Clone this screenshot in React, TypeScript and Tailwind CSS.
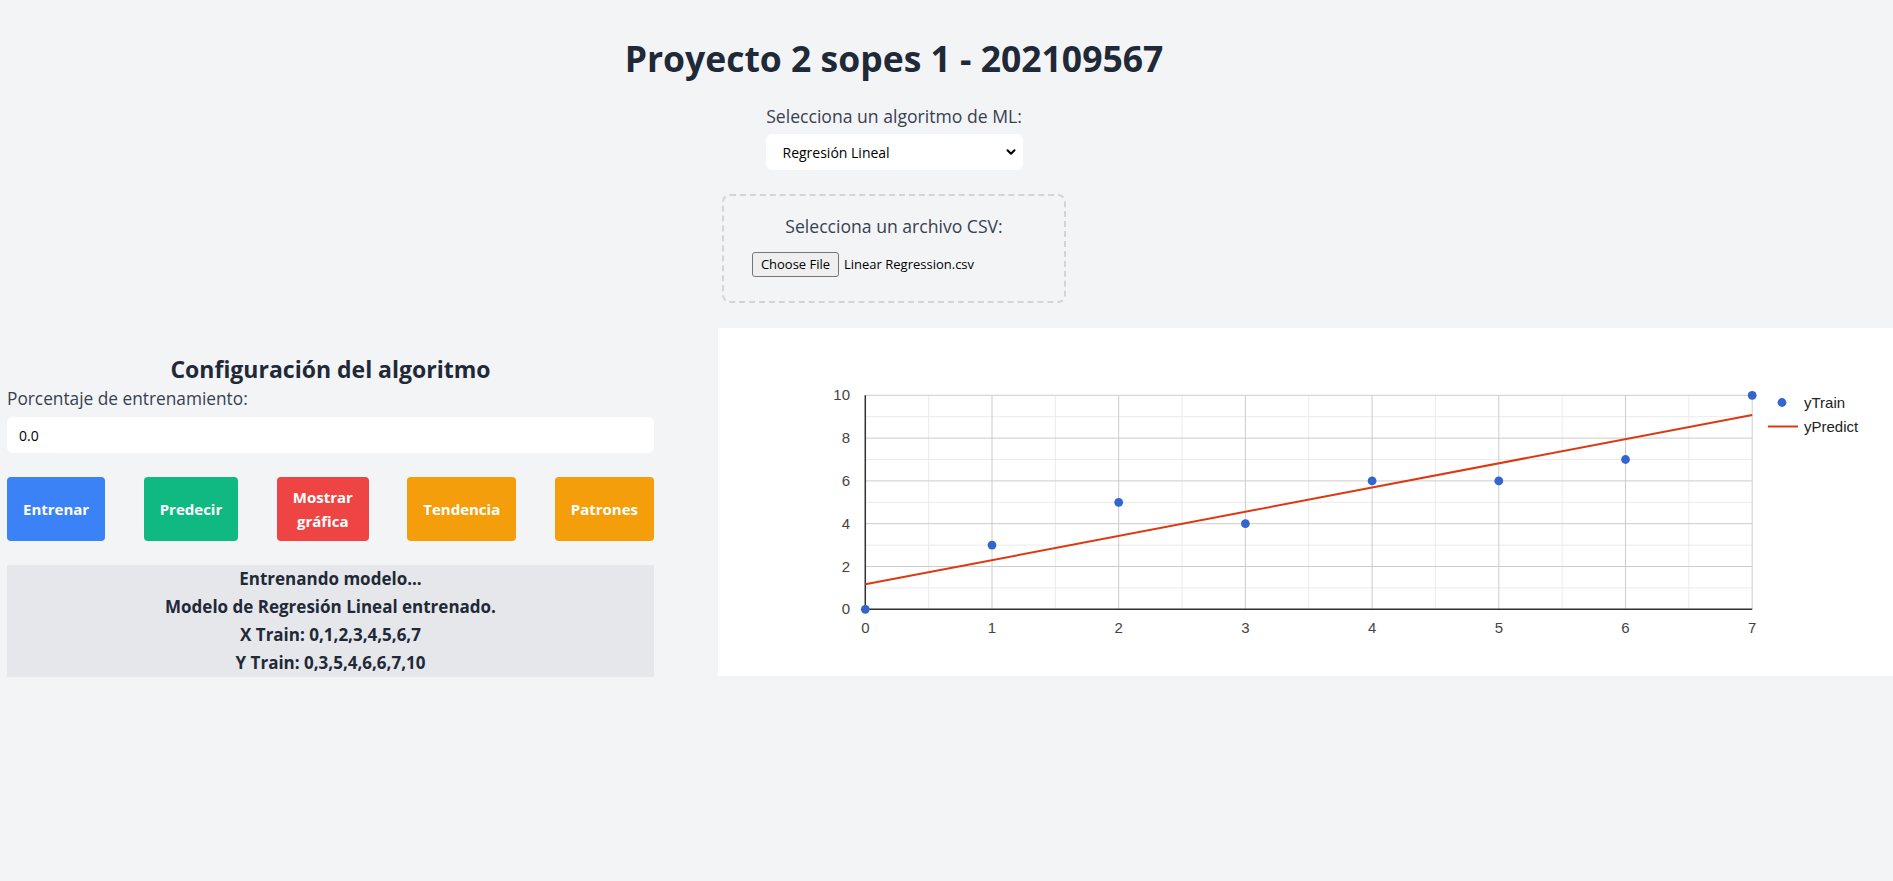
import React from 'react';
import { ChevronDown } from 'lucide-react';

const xTrain = [0, 1, 2, 3, 4, 5, 6, 7];
const yTrain = [0, 3, 5, 4, 6, 6, 7, 10];

const fit = () => {
  const n = xTrain.length;
  const mx = xTrain.reduce((a, b) => a + b, 0) / n;
  const my = yTrain.reduce((a, b) => a + b, 0) / n;
  let sxy = 0;
  let sxx = 0;
  xTrain.forEach((x, i) => {
    sxy += (x - mx) * (yTrain[i] - my);
    sxx += (x - mx) * (x - mx);
  });
  const m = sxy / sxx;
  return { m, b: my - m * mx };
};

const PX0 = 147.3;
const PXS = 126.7;
const PY0 = 281.3;
const PYS = 21.4;
const sx = (x: number) => PX0 + x * PXS;
const sy = (y: number) => PY0 - y * PYS;

const Chart: React.FC = () => {
  const { m, b } = fit();
  const major = [0, 2, 4, 6, 8, 10];
  const minorY = [1, 3, 5, 7, 9];
  const minorX = [0.5, 1.5, 2.5, 3.5, 4.5, 5.5, 6.5];
  return (
    <svg width="1175" height="348" viewBox="0 0 1175 348" style={{ fontFamily: '"Liberation Sans", Arial, sans-serif' }}>
      {minorY.map((v) => (
        <line key={'my' + v} x1={sx(0)} x2={sx(7)} y1={sy(v)} y2={sy(v)} stroke="#ebebeb" strokeWidth="1" />
      ))}
      {minorX.map((v) => (
        <line key={'mx' + v} x1={sx(v)} x2={sx(v)} y1={sy(0)} y2={sy(10)} stroke="#ebebeb" strokeWidth="1" />
      ))}
      {major.map((v) => (
        <line key={'gy' + v} x1={sx(0)} x2={sx(7)} y1={sy(v)} y2={sy(v)} stroke="#cccccc" strokeWidth="1" />
      ))}
      {xTrain.map((v) => (
        <line key={'gx' + v} x1={sx(v)} x2={sx(v)} y1={sy(0)} y2={sy(10)} stroke="#cccccc" strokeWidth="1" />
      ))}
      <line x1={sx(0)} x2={sx(7)} y1={sy(0)} y2={sy(0)} stroke="#333333" strokeWidth="1.5" />
      <line x1={sx(0)} x2={sx(0)} y1={sy(0)} y2={sy(10)} stroke="#333333" strokeWidth="1.5" />

      {major.map((v) => (
        <text key={'ly' + v} x="132" y={sy(v) + 5} textAnchor="end" fontSize="15" fill="#444444">
          {v}
        </text>
      ))}
      {xTrain.map((v) => (
        <text key={'lx' + v} x={sx(v)} y="304.5" textAnchor="middle" fontSize="15" fill="#444444">
          {v}
        </text>
      ))}

      <line x1={sx(0)} y1={sy(b)} x2={sx(7)} y2={sy(m * 7 + b)} stroke="#dc3912" strokeWidth="2" />
      {xTrain.map((x, i) => (
        <circle key={'p' + x} cx={sx(x)} cy={sy(yTrain[i])} r="4.4" fill="#3366cc" />
      ))}

      <circle cx="1064" cy="74.5" r="4.4" fill="#3366cc" />
      <text x="1086" y="79.5" fontSize="15" fill="#222222">yTrain</text>
      <line x1="1050" x2="1080" y1="98.5" y2="98.5" stroke="#dc3912" strokeWidth="2" />
      <text x="1086" y="103.5" fontSize="15" fill="#222222">yPredict</text>
    </svg>
  );
};

const buttons = [
  { label: 'Entrenar', cls: 'bg-[#3b82f6]' },
  { label: 'Predecir', cls: 'bg-[#10b981]' },
  { label: 'Mostrar gráfica', cls: 'bg-[#ef4444]' },
  { label: 'Tendencia', cls: 'bg-[#f59e0b]' },
  { label: 'Patrones', cls: 'bg-[#f59e0b]' },
];

const App: React.FC = () => {
  return (
    <div className="min-h-[881px] bg-[#f3f4f6] text-[#1f2937]" style={{ fontFamily: '"Open Sans", "Noto Sans", sans-serif' }}>
      <div className="w-[1788px] flex flex-col items-center pt-[38px]">
        <h1 className="text-[35.5px] leading-10 font-bold text-[#1f2937]">Proyecto 2 sopes 1 - 202109567</h1>
        <label className="mt-6 text-[17.6px] leading-7 font-medium text-[#374151]">Selecciona un algoritmo de ML:</label>
        <div className="relative mt-1 w-[257px] h-9">
          <select className="w-full h-full appearance-none bg-white rounded-md pl-[17px] text-[14px] text-black outline-none">
            <option>Regresión Lineal</option>
          </select>
          <ChevronDown className="absolute right-[5px] top-[11px] w-[14px] h-[14px] text-black pointer-events-none" strokeWidth={3.5} />
        </div>
        <div className="mt-6 w-[344px] h-[109px] border-2 border-dashed border-[#d1d5db] rounded-lg pt-4">
          <p className="text-center text-[17.6px] leading-7 font-medium text-[#374151]">Selecciona un archivo CSV:</p>
          <div className="mt-3 pl-7 flex items-center gap-[5px] text-[13px] text-black">
            <button className="h-[25px] w-[87px] bg-[#efefef] border border-[#767676] rounded-[3px] text-[13px] text-black">Choose File</button>
            <span>Linear Regression.csv</span>
          </div>
        </div>
      </div>

      <div className="mt-[25px] flex">
        <div className="ml-[7px] w-[647px] pt-[25px]">
          <h2 className="text-center text-[23px] leading-8 font-bold text-[#1f2937]">Configuración del algoritmo</h2>
          <label className="block text-[17.3px] leading-7 text-[#374151]">Porcentaje de entrenamiento:</label>
          <input
            type="text"
            defaultValue="0.0"
            className="mt-1 w-full h-9 bg-white rounded-md px-3 text-[14px] text-black outline-none"
          />
          <div className="mt-6 flex justify-between">
            {buttons.map((btn) => (
              <button
                key={btn.label}
                className={`${btn.cls} text-white font-bold text-[15px] leading-6 rounded py-2 px-4 ${btn.label === 'Mostrar gráfica' ? 'w-[92px]' : ''}`}
              >
                {btn.label}
              </button>
            ))}
          </div>
          <div className="mt-6 bg-[#e5e7eb] text-center font-bold text-[17px] leading-7 text-[#1f2937]">
            <p>Entrenando modelo...</p>
            <p>Modelo de Regresión Lineal entrenado.</p>
            <p>X Train: 0,1,2,3,4,5,6,7</p>
            <p>Y Train: 0,3,5,4,6,6,7,10</p>
          </div>
        </div>
        <div className="ml-16 w-[1175px] h-[348px] bg-white shrink-0">
          <Chart />
        </div>
      </div>
    </div>
  );
};

export default App;
